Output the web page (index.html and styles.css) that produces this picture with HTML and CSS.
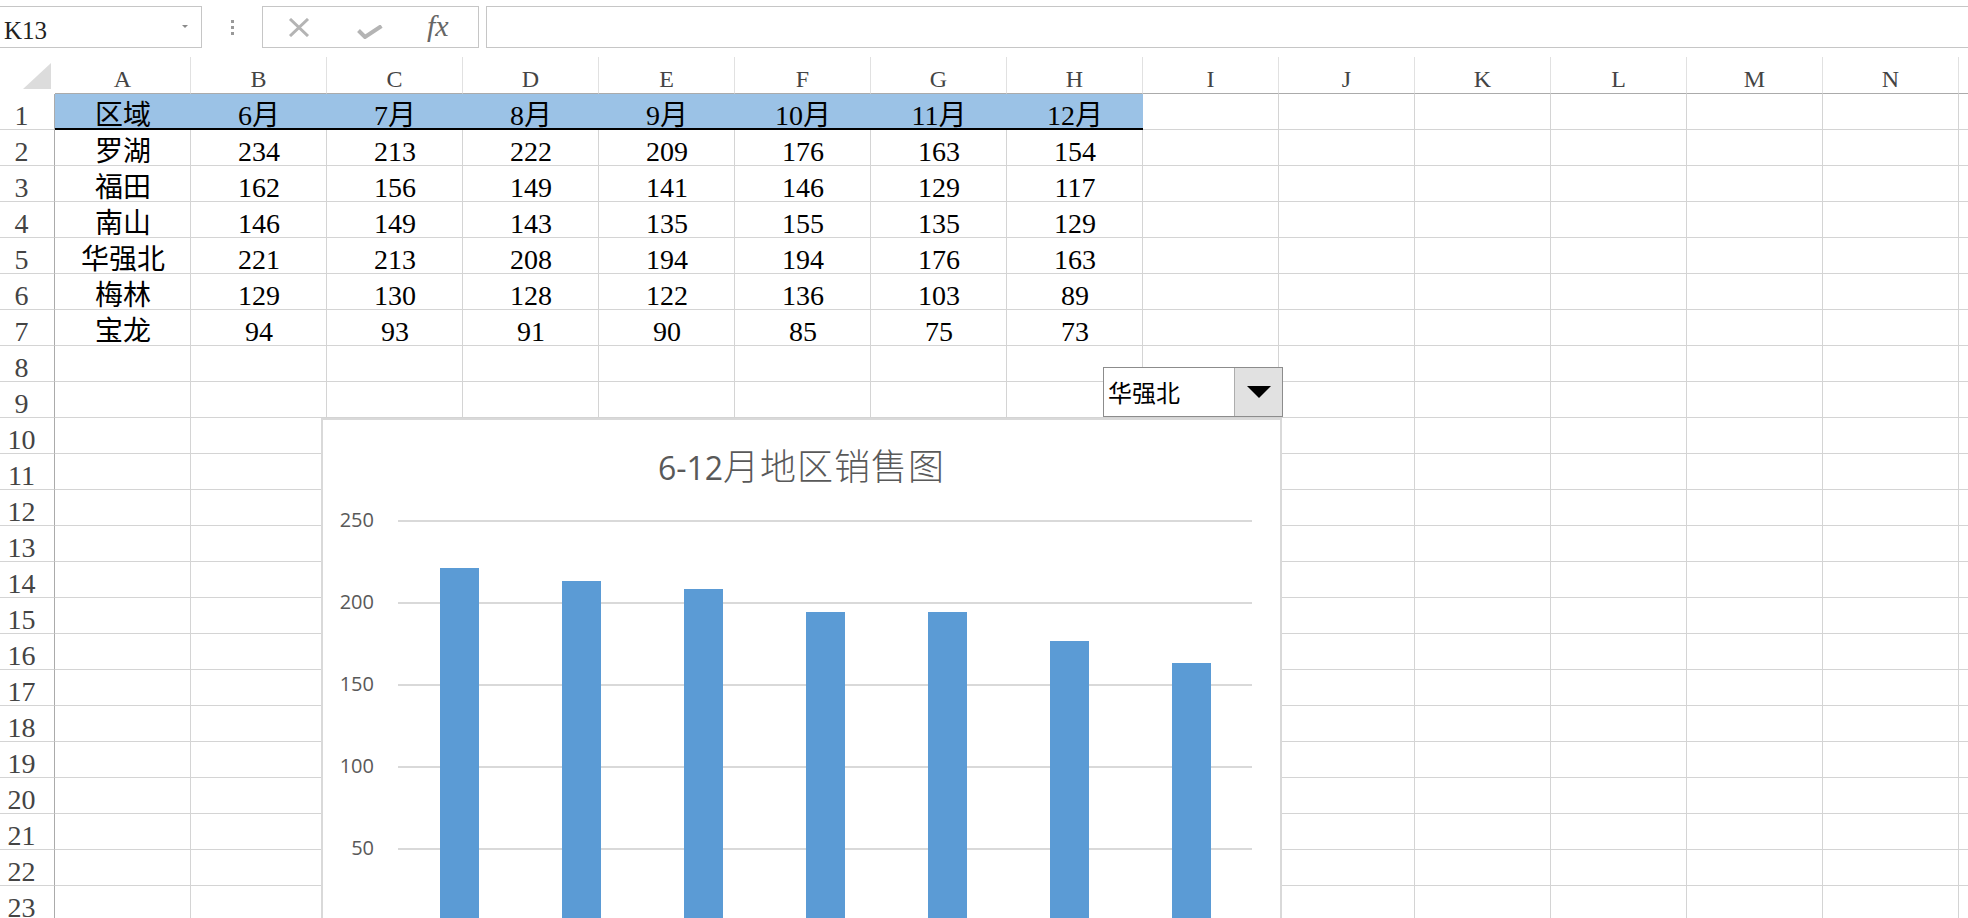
FILE: index.html
```html
<!DOCTYPE html>
<html lang="zh-CN">
<head>
<meta charset="utf-8">
<title>6-12月地区销售图</title>
<link rel="stylesheet" href="styles.css">
</head>
<body>
<div class="formula-bar">
  <div class="name-box"><span class="name-text">K13</span><span class="name-arrow"></span></div>
  <div class="dots"><i></i><i></i><i></i></div>
  <div class="fx-box">
    <svg class="ico-x" width="22" height="19" viewBox="0 0 22 19"><path d="M2 1 L20 18 M20 1 L2 18" stroke="#b4b4b4" stroke-width="3" fill="none"/></svg>
    <svg class="ico-ok" width="26" height="14" viewBox="0 0 26 14"><path d="M1.5 5.5 L8 12 L24.5 1" stroke="#b4b4b4" stroke-width="4" fill="none" stroke-linejoin="miter"/></svg>
    <span class="fx">fx</span>
  </div>
  <div class="formula-input"></div>
</div>

<div class="col-heads">
  <div class="corner"><svg width="55" height="37" viewBox="0 0 55 37"><polygon points="23,32 51,6 51,32" fill="#dcdcdc"/></svg></div>
  <div class="col-head">A</div>
  <div class="col-head">B</div>
  <div class="col-head">C</div>
  <div class="col-head">D</div>
  <div class="col-head">E</div>
  <div class="col-head">F</div>
  <div class="col-head">G</div>
  <div class="col-head">H</div>
  <div class="col-head">I</div>
  <div class="col-head">J</div>
  <div class="col-head">K</div>
  <div class="col-head">L</div>
  <div class="col-head">M</div>
  <div class="col-head">N</div>
  <div class="col-head"></div>
</div>

<div class="sheet-body">
  <div class="row-heads">
    <div class="row-head">1</div>
    <div class="row-head">2</div>
    <div class="row-head">3</div>
    <div class="row-head">4</div>
    <div class="row-head">5</div>
    <div class="row-head">6</div>
    <div class="row-head">7</div>
    <div class="row-head">8</div>
    <div class="row-head">9</div>
    <div class="row-head">10</div>
    <div class="row-head">11</div>
    <div class="row-head">12</div>
    <div class="row-head">13</div>
    <div class="row-head">14</div>
    <div class="row-head">15</div>
    <div class="row-head">16</div>
    <div class="row-head">17</div>
    <div class="row-head">18</div>
    <div class="row-head">19</div>
    <div class="row-head">20</div>
    <div class="row-head">21</div>
    <div class="row-head">22</div>
    <div class="row-head">23</div>
  </div>
  <div class="cells">
    <div class="data">
      <div class="hd">区域</div><div class="hd">6月</div><div class="hd">7月</div><div class="hd">8月</div><div class="hd">9月</div><div class="hd">10月</div><div class="hd">11月</div><div class="hd">12月</div>
      <div>罗湖</div><div>234</div><div>213</div><div>222</div><div>209</div><div>176</div><div>163</div><div>154</div>
      <div>福田</div><div>162</div><div>156</div><div>149</div><div>141</div><div>146</div><div>129</div><div>117</div>
      <div>南山</div><div>146</div><div>149</div><div>143</div><div>135</div><div>155</div><div>135</div><div>129</div>
      <div>华强北</div><div>221</div><div>213</div><div>208</div><div>194</div><div>194</div><div>176</div><div>163</div>
      <div>梅林</div><div>129</div><div>130</div><div>128</div><div>122</div><div>136</div><div>103</div><div>89</div>
      <div>宝龙</div><div>94</div><div>93</div><div>91</div><div>90</div><div>85</div><div>75</div><div>73</div>
    </div>
  </div>
</div>

<div class="combo">
  <span class="combo-text">华强北</span>
  <span class="combo-btn"><span class="tri"></span></span>
</div>

<div class="chart">
  <div class="chart-title">6-12<span class="cjk">月地区销售图</span></div>
  <div class="chart-body">
    <div class="y-axis">
      <div>250</div><div>200</div><div>150</div><div>100</div><div>50</div>
    </div>
    <div class="plot">
      <div class="cat"><div class="bar" style="height:362px"></div></div>
      <div class="cat"><div class="bar" style="height:349px"></div></div>
      <div class="cat"><div class="bar" style="height:341px"></div></div>
      <div class="cat"><div class="bar" style="height:318px"></div></div>
      <div class="cat"><div class="bar" style="height:318px"></div></div>
      <div class="cat"><div class="bar" style="height:289px"></div></div>
      <div class="cat"><div class="bar" style="height:267px"></div></div>
    </div>
  </div>
</div>
</body>
</html>
```

FILE: styles.css
```css
html, body {
  margin: 0;
  padding: 0;
}
body {
  width: 1968px;
  height: 918px;
  overflow: hidden;
  background: #fff;
  font-family: "Liberation Serif", "Noto Sans CJK SC", serif;
  color: #000;
}

/* ---------- formula bar ---------- */
.formula-bar {
  display: flex;
  height: 42px;
  margin-top: 6px;
  overflow: hidden;
}
.name-box {
  box-sizing: border-box;
  width: 203px;
  margin-left: -1px;
  border: 1px solid #c6c6c6;
  display: flex;
  justify-content: space-between;
  align-items: flex-start;
  padding: 11px 0 0 4px;
  flex: none;
}
.name-text {
  font-size: 25px;
  line-height: 25px;
  color: #222;
}
.name-arrow {
  width: 0;
  height: 0;
  border-left: 3px solid transparent;
  border-right: 3px solid transparent;
  border-top: 3px solid #8a8a8a;
  margin: 7px 13px 0 0;
}
.dots {
  flex: none;
  width: 3px;
  margin-left: 29px;
  display: flex;
  flex-direction: column;
  justify-content: center;
  gap: 3px;
}
.dots i {
  display: block;
  width: 3px;
  height: 3px;
  background: #999;
}
.fx-box {
  flex: none;
  box-sizing: border-box;
  width: 217px;
  margin-left: 28px;
  border: 1px solid #c6c6c6;
  display: flex;
  align-items: center;
}
.ico-x {
  margin-left: 25px;
  margin-top: 1px;
}
.ico-ok {
  margin-left: 47px;
  margin-top: 9px;
}
.fx {
  margin-left: 44px;
  font-family: "Liberation Serif", serif;
  font-style: italic;
  font-size: 30px;
  line-height: 30px;
  color: #666;
  margin-top: -2px;
}
.formula-input {
  flex: 1;
  margin-left: 7px;
  margin-right: -2px;
  border: 1px solid #c6c6c6;
}

/* ---------- column headings ---------- */
.col-heads {
  display: flex;
  width: 1968px;
  height: 37px;
  margin-top: 9px;
  overflow: hidden;
}
.corner {
  flex: none;
  width: 55px;
  height: 37px;
  box-sizing: border-box;
}
.corner svg {
  display: block;
}
.col-head {
  flex: none;
  width: 136px;
  height: 37px;
  box-sizing: border-box;
  border-right: 1px solid #e1e1e1;
  border-bottom: 1px solid #ababab;
  text-align: center;
  font-size: 24px;
  line-height: 27px;
  padding-top: 9px;
  color: #444;
}

/* ---------- sheet body ---------- */
.sheet-body {
  display: flex;
  width: 1968px;
  overflow: hidden;
}
.row-heads {
  flex: none;
  width: 55px;
}
.row-head {
  box-sizing: border-box;
  height: 36px;
  border-right: 1px solid #ababab;
  border-bottom: 1px solid #d4d4d4;
  text-align: center;
  padding-right: 11px;
  padding-top: 8px;
  font-size: 28px;
  line-height: 28px;
  color: #444;
}
.cells {
  flex: 1;
  height: 828px;
  background-image:
    linear-gradient(to right, transparent 135px, #d4d4d4 135px),
    linear-gradient(to bottom, transparent 35px, #d4d4d4 35px);
  background-size: 136px 36px;
}
.data {
  display: grid;
  grid-template-columns: repeat(8, 136px);
  grid-auto-rows: 36px;
}
.data > div {
  box-sizing: border-box;
  text-align: center;
  font-size: 28px;
  line-height: 28px;
  padding-top: 8px;
  white-space: nowrap;
}
.data > .hd {
  background: #9bc2e6;
  border-bottom: 2px solid #000;
}

/* ---------- combo box (form control) ---------- */
.combo {
  position: absolute;
  left: 1103px;
  top: 367px;
  width: 180px;
  height: 50px;
  box-sizing: border-box;
  border: 1px solid #8c8c8c;
  background: #fff;
  display: flex;
  z-index: 2;
}
.combo-text {
  flex: 1;
  padding-left: 4px;
  font-family: "Noto Sans CJK SC", sans-serif;
  font-size: 24px;
  line-height: 48px;
  color: #000;
}
.combo-btn {
  flex: none;
  box-sizing: border-box;
  width: 48px;
  background: #e1e1e1;
  border-left: 1px solid #adadad;
  display: flex;
  align-items: center;
  justify-content: center;
}
.tri {
  width: 0;
  height: 0;
  border-left: 12px solid transparent;
  border-right: 12px solid transparent;
  border-top: 12px solid #000;
}

/* ---------- chart ---------- */
.chart {
  position: absolute;
  left: 321px;
  top: 418px;
  width: 961px;
  height: 502px;
  box-sizing: border-box;
  border: 2px solid #d9d9d9;
  border-bottom: 0;
  background: #fff;
  z-index: 1;
  overflow: hidden;
}
.chart-title {
  height: 100px;
  box-sizing: border-box;
  padding-top: 24px;
  text-align: center;
  font-family: "Open Sans", "Noto Sans CJK SC", sans-serif;
  font-size: 32px;
  line-height: 40px;
  color: #595959;
  white-space: nowrap;
}
.chart-title .cjk {
  font-family: "Noto Sans CJK SC", sans-serif;
  font-size: 36px;
  font-weight: 300;
  letter-spacing: 1px;
}
.chart-body {
  display: flex;
}
.y-axis {
  flex: none;
  width: 51px;
  text-align: right;
  font-family: "Open Sans", sans-serif;
  font-size: 20px;
  color: #595959;
}
.y-axis div {
  height: 82px;
  line-height: 0;
}
.plot {
  flex: none;
  width: 854px;
  height: 410px;
  margin-left: 24px;
  display: flex;
  align-items: flex-end;
  background-image: linear-gradient(to bottom, #d9d9d9 2px, transparent 2px);
  background-size: 100% 82px;
}
.cat {
  flex: 1;
  height: 100%;
  display: flex;
  justify-content: center;
  align-items: flex-end;
}
.bar {
  width: 39px;
  background: #5b9bd5;
}
```
